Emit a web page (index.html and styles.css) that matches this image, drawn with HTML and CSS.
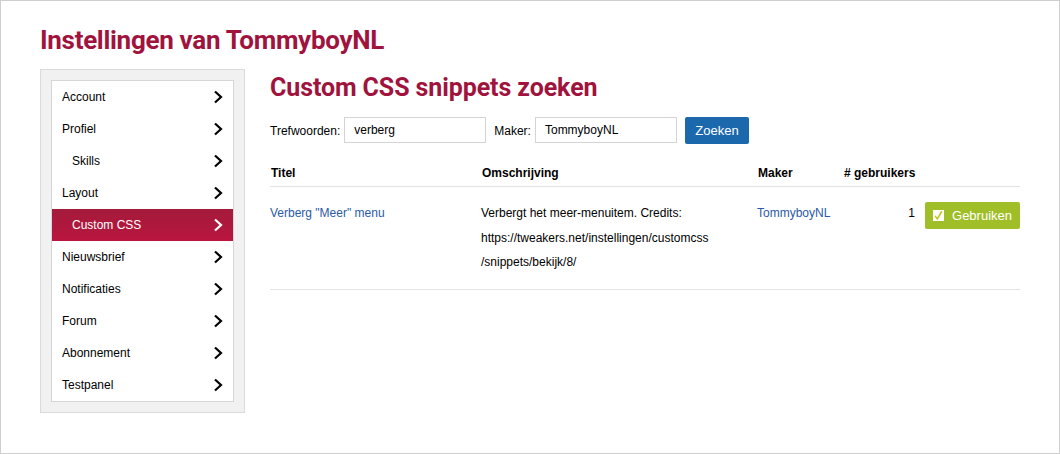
FILE: index.html
```html
<!DOCTYPE html>
<html>
<head>
    <meta charset="UTF-8">
    <title>Instellingen van TommyboyNL</title>
    <link rel="stylesheet" href="styles.css">
</head>
<body>
    <div class="page">
        <h1 class="page-title">Instellingen van TommyboyNL</h1>
        <div class="layout">
            <div class="sidebar">
                <ul class="menu">
                    <li><a href="#">Account<svg class="chevron" viewBox="0 0 10 14"><polyline points="2,1.5 8,7 2,12.5"/></svg></a></li>
                    <li><a href="#">Profiel<svg class="chevron" viewBox="0 0 10 14"><polyline points="2,1.5 8,7 2,12.5"/></svg></a></li>
                    <li class="sub"><a href="#">Skills<svg class="chevron" viewBox="0 0 10 14"><polyline points="2,1.5 8,7 2,12.5"/></svg></a></li>
                    <li><a href="#">Layout<svg class="chevron" viewBox="0 0 10 14"><polyline points="2,1.5 8,7 2,12.5"/></svg></a></li>
                    <li class="sub active"><a href="#">Custom CSS<svg class="chevron" viewBox="0 0 10 14"><polyline points="2,1.5 8,7 2,12.5"/></svg></a></li>
                    <li><a href="#">Nieuwsbrief<svg class="chevron" viewBox="0 0 10 14"><polyline points="2,1.5 8,7 2,12.5"/></svg></a></li>
                    <li><a href="#">Notificaties<svg class="chevron" viewBox="0 0 10 14"><polyline points="2,1.5 8,7 2,12.5"/></svg></a></li>
                    <li><a href="#">Forum<svg class="chevron" viewBox="0 0 10 14"><polyline points="2,1.5 8,7 2,12.5"/></svg></a></li>
                    <li><a href="#">Abonnement<svg class="chevron" viewBox="0 0 10 14"><polyline points="2,1.5 8,7 2,12.5"/></svg></a></li>
                    <li><a href="#">Testpanel<svg class="chevron" viewBox="0 0 10 14"><polyline points="2,1.5 8,7 2,12.5"/></svg></a></li>
                </ul>
            </div>

            <div class="content">
                <h2 class="section-title">Custom CSS snippets zoeken</h2>
                <form class="search-form">
                    <label for="keywords">Trefwoorden:</label>
                    <input type="text" id="keywords" value="verberg">
                    <label for="maker" class="maker-label">Maker:</label>
                    <input type="text" id="maker" value="TommyboyNL">
                    <button type="submit" class="search-button">Zoeken</button>
                </form>

                <table class="snippets">
                    <colgroup>
                        <col class="col-title">
                        <col class="col-desc">
                        <col class="col-maker">
                        <col class="col-users">
                        <col class="col-action">
                    </colgroup>
                    <thead>
                        <tr>
                            <th>Titel</th>
                            <th>Omschrijving</th>
                            <th>Maker</th>
                            <th class="users">#&nbsp;gebruikers</th>
                            <th></th>
                        </tr>
                    </thead>
                    <tbody>
                        <tr>
                            <td><a href="#">Verberg "Meer" menu</a></td>
                            <td>Verbergt het meer-menuitem. Credits: https://tweakers.net/instellingen/customcss<wbr>/snippets/bekijk/8/</td>
                            <td><a href="#">TommyboyNL</a></td>
                            <td class="users">1</td>
                            <td class="action">
                                <button class="use-button">
                                    <svg class="check" viewBox="0 0 13 13">
                                        <rect x="0" y="0" width="13" height="13" fill="#fff"/>
                                        <polyline points="2.5,7 5,10.5 10.5,1.5" fill="none" stroke="#c3c712" stroke-width="1.8"/>
                                    </svg>
                                    Gebruiken
                                </button>
                            </td>
                        </tr>
                    </tbody>
                </table>
            </div>
        </div>
    </div>
</body>
</html>
```

FILE: styles.css
```css
* {
    margin: 0;
    padding: 0;
    box-sizing: border-box;
}

body {
    font-family: 'Liberation Sans', Arial, sans-serif;
    font-size: 12px;
    color: #000;
    background-color: #fff;
}

a {
    text-decoration: none;
}

.page {
    width: 1060px;
    height: 454px;
    border: 1px solid #cfcfcf;
    padding: 22px 39px 0;
}

.page-title {
    font-family: 'Roboto', sans-serif;
    font-weight: bold;
    font-size: 26px;
    line-height: 34px;
    color: #a0133d;
    letter-spacing: -0.3px;
    margin-bottom: 12px;
}

.layout {
    display: flex;
    gap: 25px;
}

/* Sidebar menu */

.sidebar {
    width: 205px;
    flex-shrink: 0;
    background-color: #f1f1f1;
    border: 1px solid #dadada;
    padding: 10px;
    align-self: flex-start;
}

.menu {
    list-style: none;
    background-color: #fff;
    border: 1px solid #d6d6d6;
}

.menu a {
    display: flex;
    align-items: center;
    justify-content: space-between;
    height: 32px;
    padding: 0 10px;
    color: #000;
}

.menu .sub a {
    padding-left: 20px;
}

.menu .active a {
    background: linear-gradient(#a31b3b, #ba153f);
    color: #fff;
}

.chevron {
    width: 10px;
    height: 14px;
    fill: none;
    stroke: #000;
    stroke-width: 2.2;
}

.menu .active .chevron {
    stroke: #fff;
}

/* Content */

.content {
    width: 750px;
}

.section-title {
    font-family: 'Roboto', sans-serif;
    font-weight: bold;
    font-size: 25px;
    line-height: 30px;
    color: #a0133d;
    letter-spacing: -0.1px;
    margin-top: 4px;
    margin-bottom: 14px;
}

.search-form {
    display: flex;
    align-items: center;
}

.search-form label {
    margin-right: 4px;
}

.search-form .maker-label {
    margin-left: 8px;
}

.search-form input {
    width: 142px;
    height: 26px;
    border: 1px solid #d4d4d4;
    padding: 0 9px;
    font-family: 'Liberation Sans', Arial, sans-serif;
    font-size: 12px;
    color: #000;
    margin-top: -1px;
}

.search-button {
    margin-left: 8px;
    width: 64px;
    height: 27px;
    border: none;
    border-radius: 2px;
    background-color: #1c68ad;
    color: #fff;
    font-family: 'Liberation Sans', Arial, sans-serif;
    font-size: 13px;
    cursor: pointer;
}

/* Results table */

.snippets {
    margin-top: 16px;
    width: 750px;
    table-layout: fixed;
    border-collapse: collapse;
}

.col-title { width: 211px; }
.col-desc { width: 276px; }
.col-maker { width: 86px; }
.col-users { width: 72px; }
.col-action { width: 105px; }

.snippets th {
    text-align: left;
    font-weight: bold;
    line-height: 24px;
    padding: 1px 0 1px 1px;
    border-bottom: 1px solid #e3e3e3;
}

.snippets td {
    vertical-align: top;
    line-height: 24.5px;
    padding: 14px 0 14px;
    border-bottom: 1px solid #e3e3e3;
}

.snippets td:nth-child(2) {
    padding-right: 14px;
}

.snippets td a {
    color: #2a5ba5;
}

.snippets .users {
    text-align: right;
}

.snippets .action {
    text-align: right;
}

.use-button {
    display: inline-flex;
    align-items: center;
    gap: 8px;
    height: 27px;
    width: 95px;
    padding: 0 8px;
    border: none;
    border-radius: 2px;
    background-color: #a0be27;
    color: #fff;
    font-family: 'Liberation Sans', Arial, sans-serif;
    font-size: 13px;
    cursor: pointer;
    vertical-align: top;
    margin-top: 1px;
}

.check {
    width: 13px;
    height: 13px;
}
```
